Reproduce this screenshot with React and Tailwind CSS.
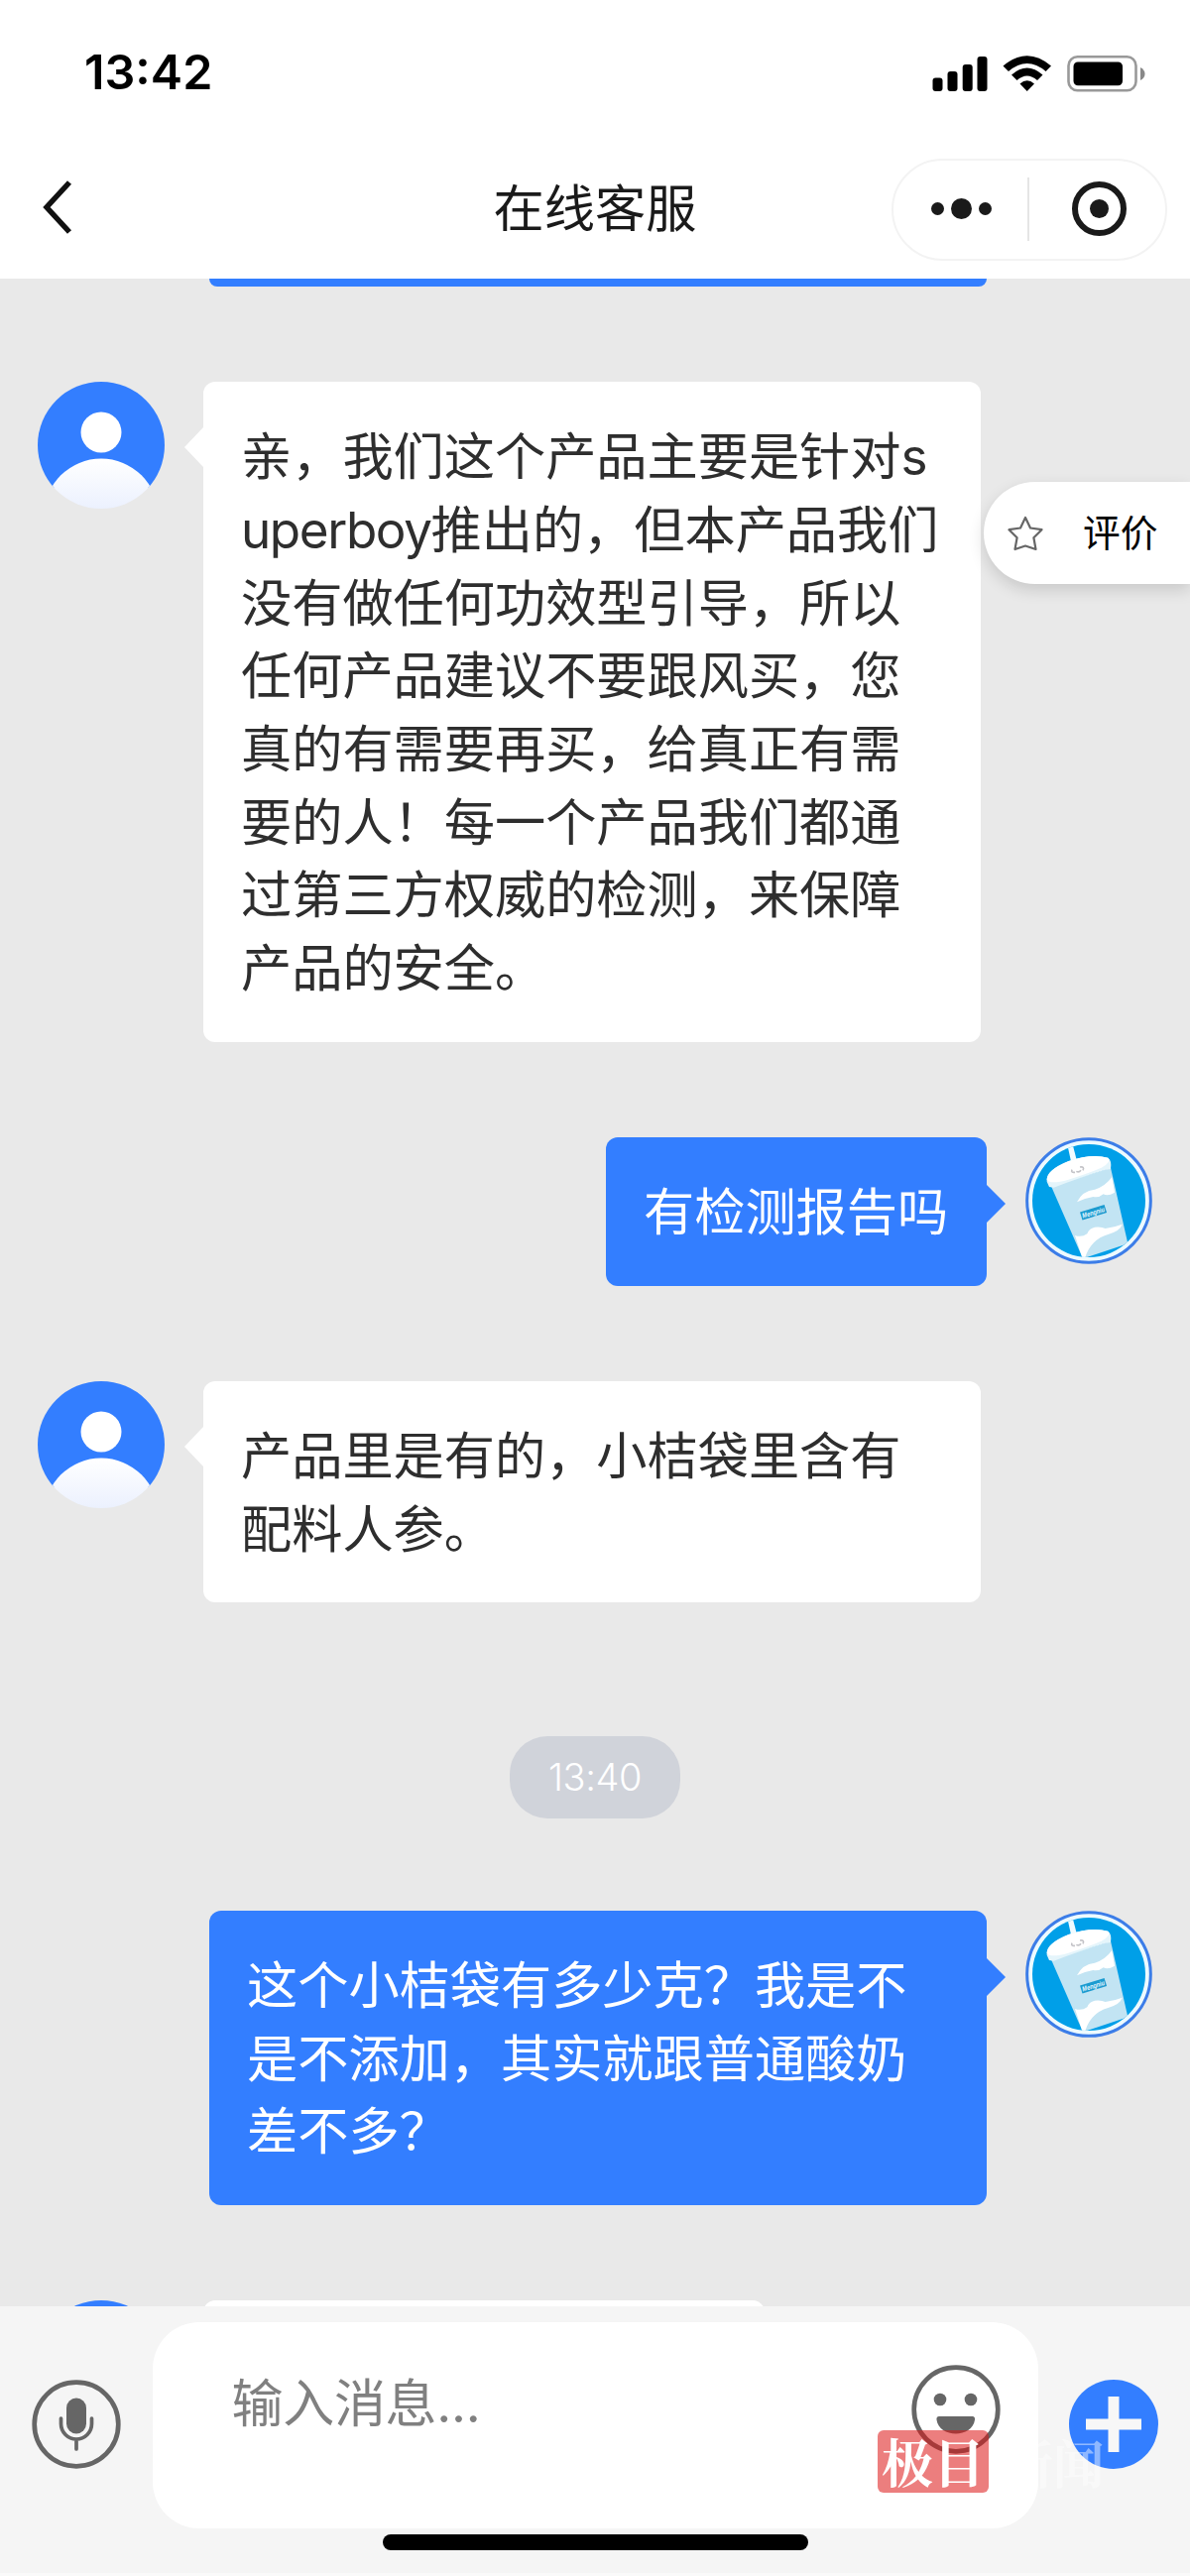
import { useState } from 'react'

const messages = [
  {
    id: 1, from: 'agent',
    lines: [
      '亲，我们这个产品主要是针对s',
      'uperboy推出的，但本产品我们',
      '没有做任何功效型引导，所以',
      '任何产品建议不要跟风买，您',
      '真的有需要再买，给真正有需',
      '要的人！每一个产品我们都通',
      '过第三方权威的检测，来保障',
      '产品的安全。',
    ],
  },
  { id: 2, from: 'user', lines: ['有检测报告吗'] },
  { id: 3, from: 'agent', lines: ['产品里是有的，小桔袋里含有', '配料人参。'] },
  { id: 4, time: '13:40' },
  { id: 5, from: 'user', lines: ['这个小桔袋有多少克？我是不', '是不添加，其实就跟普通酸奶', '差不多？'] },
]

function StatusIcons() {
  return (
    <svg width="216" height="40" viewBox="940 53 216 40">
      <rect x="940.5" y="77.5" width="10" height="13.5" rx="3" />
      <rect x="955.5" y="71" width="10" height="20" rx="3" />
      <rect x="970.7" y="64" width="10" height="27" rx="3" />
      <rect x="985.5" y="56" width="10" height="35" rx="3" />
      <path d="M1011.5 65.5 Q1035.7 45 1060 65.5 L1054.6 71 Q1035.7 55 1017 71 Z" />
      <path d="M1020 74.5 Q1035.7 60.5 1051.5 74.5 L1046 80 Q1035.7 71 1025.5 80 Z" />
      <path d="M1028.5 83.5 Q1035.7 77 1043 83.5 L1035.7 91 Z" />
      <rect x="1077.5" y="56.3" width="68" height="34" rx="9" fill="none" stroke="#999" strokeWidth="2.6" />
      <rect x="1082.5" y="61.5" width="49.5" height="23.7" rx="4.5" />
      <path d="M1150 67 Q1154.5 69.5 1154.5 73.5 Q1154.5 77.5 1150 80 Z" fill="#888" />
    </svg>
  )
}

function AgentAvatar() {
  return (
    <svg className="shrink-0" width="128" height="128" viewBox="0 0 128 128">
      <defs>
        <clipPath id="face"><circle cx="64" cy="64" r="64" /></clipPath>
        <clipPath id="upper"><rect width="128" height="107" /></clipPath>
        <linearGradient id="body" x1="0" y1="0" x2="0" y2="1">
          <stop offset="0" stopColor="#fff" />
          <stop offset="0.5" stopColor="#e9effe" />
        </linearGradient>
      </defs>
      <g clipPath="url(#upper)">
        <circle cx="64" cy="64" r="64" fill="#337eff" />
      </g>
      <circle cx="64" cy="51" r="20.5" fill="#fff" />
      <circle cx="64" cy="135" r="57.5" fill="url(#body)" clipPath="url(#face)" />
    </svg>
  )
}

function CupAvatar() {
  return (
    <svg className="shrink-0" width="128" height="128" viewBox="100 78 384 384">
      <defs>
        <clipPath id="cup"><circle cx="292" cy="270" r="171" /></clipPath>
      </defs>
      <circle cx="292" cy="270" r="187" fill="#edfaff" stroke="#3c7de8" strokeWidth="9" />
      <circle cx="292" cy="270" r="171" fill="#009fe8" />
      <g clipPath="url(#cup)">
        <path d="M226 96 L242 96 L256 150 L239 155 Z" fill="#f2fbff" />
        <path d="M178 226 L274 445 L410 400 L358 170 Z" fill="#c2e4f3" />
        <path d="M256 274 Q272 240 310 236 Q342 226 362 198 L370 245 Q350 257 336 250 Q322 262 305 258 Q280 262 256 274 Z" fill="#fff" />
        <path d="M250 375 Q270 382 287 370 Q292 354 310 350 Q330 348 342 354 Q370 350 393 341 Q388 360 350 372 Q296 388 280 445 L272 442 Z" fill="#fff" />
        <path d="M165 212 Q160 178 230 150 Q300 126 350 140 Q362 148 358 174 L340 177 Q270 198 186 230 L172 228 Z" fill="#e5f5fb" />
        <path d="M165 206 Q165 178 230 151 Q300 126 350 140 Q362 152 330 170 Q290 187 230 206 Q175 222 165 206 Z" fill="#fff" />
        <path d="M241 176 Q237 186 250 184 M254 181 Q262 186 268 178 M265 168 Q280 166 274 178" fill="none" stroke="#c4c4c8" strokeWidth="5" />
        <g transform="rotate(-17 305 305)">
          <rect x="267" y="293" width="77" height="25" fill="#1b9bd0" />
          <text x="305.5" y="313" textAnchor="middle" fontSize="21" fontWeight="700" fontStyle="italic" fill="#e8f8ff" fontFamily="Liberation Sans, sans-serif" textLength="70" lengthAdjust="spacingAndGlyphs">Mengniu</text>
        </g>
      </g>
    </svg>
  )
}

// latin runs are set a little tighter than the chinese text
function Line({ text }) {
  return (
    <p className="whitespace-nowrap">
      {text.split(/([a-z]+)/).filter(Boolean).map((part, i) => (
        /[a-z]/.test(part) ? <span key={i} className="tracking-[-1.4px]">{part}</span> : part
      ))}
    </p>
  )
}

function Bubble({ from, lines }) {
  if (from === 'agent') {
    return (
      <div className="flex items-start pl-[38px]">
        <AgentAvatar />
        <svg className="ml-5 mt-[46px] shrink-0" width="19" height="40" viewBox="0 0 19 40">
          <path d="M19 0 V40 L0 20 Z" fill="#fff" />
        </svg>
        <div className="w-[784px] rounded-xl bg-white px-[38px] pb-[37px] pt-[39px] text-[51.2px] leading-[73.7px] text-[#2e2e2e]">
          {lines.map(l => <Line key={l} text={l} />)}
        </div>
      </div>
    )
  }
  return (
    <div className="flex items-start justify-end pr-[38px]">
      <div className={`rounded-xl bg-[#337eff] px-[38px] pb-[37px] pt-[39px] text-[51.2px] leading-[73.7px] text-white ${lines.length > 1 ? 'w-[784px]' : 'w-[384px]'}`}>
        {lines.map(l => <Line key={l} text={l} />)}
      </div>
      <svg className="mr-5 mt-[48px] shrink-0" width="19" height="38" viewBox="0 0 19 38">
        <path d="M0 0 V38 L19 19 Z" fill="#337eff" />
      </svg>
      <CupAvatar />
    </div>
  )
}

export default function App() {
  const [text, setText] = useState('')

  return (
    <div className="relative flex h-[2598px] w-[1200px] flex-col overflow-hidden bg-[#e9e9e9] font-['Inter','Noto_Sans_CJK_SC',sans-serif]">
      <header className="flex h-[281px] shrink-0 flex-col bg-white">
        <div className="flex h-[147px] items-center justify-between pl-[85px] pr-[44px]">
          <span className="text-[48.5px] font-semibold leading-none text-black">13:42</span>
          <StatusIcons />
        </div>
        <div className="grid h-[128px] grid-cols-3 items-center pl-[41px] pr-[23px]">
          <button className="pb-1">
            <svg width="34" height="58" viewBox="0 0 34 58">
              <path d="M29 4 L6 29 L29 54" fill="none" stroke="#111" strokeWidth="5.5" />
            </svg>
          </button>
          <h1 className="-ml-[18px] text-center text-[51.2px] leading-none text-[#1a1a1a]">在线客服</h1>
          <div className="flex h-[103px] w-[278px] items-center justify-self-end rounded-full border-2 border-[#f3f3f3]">
            <button className="flex flex-1 items-center justify-center gap-[7px] pb-[2px] pl-[2px]">
              <i className="h-[13px] w-[13px] rounded-full bg-[#1a1a1a]" />
              <i className="h-[21px] w-[21px] rounded-full bg-[#1a1a1a]" />
              <i className="h-[13px] w-[13px] rounded-full bg-[#1a1a1a]" />
            </button>
            <div className="h-16 w-[2px] bg-[#e5e5e5]" />
            <button className="flex flex-1 justify-center pb-[2px] pl-[3px]">
              <span className="flex h-[55px] w-[55px] items-center justify-center rounded-full border-[6.5px] border-[#1a1a1a]">
                <i className="h-[19px] w-[19px] rounded-full bg-[#1a1a1a]" />
              </span>
            </button>
          </div>
        </div>
      </header>

      <main className="flex h-[2045px] shrink-0 flex-col gap-[96.2px] overflow-hidden">
        <div className="ml-[211px] h-2 w-[784px] shrink-0 rounded-b-xl bg-[#337eff]" />
        {messages.map(m => m.time ? (
          <div key={m.id} className="-mb-[3.2px] mt-[38.5px] flex justify-center">
            <span className="flex h-[83px] w-[172px] items-center justify-center rounded-[38px] bg-[#d0d3da] text-[38px] font-light tracking-[-0.4px] text-white">{m.time}</span>
          </div>
        ) : (
          <Bubble key={m.id} from={m.from} lines={m.lines} />
        ))}
        <div className="flex items-start pl-[38px]">
          <AgentAvatar />
          <div className="ml-[39px] h-[150px] w-[566px] rounded-xl bg-white" />
        </div>
      </main>

      <footer className="flex h-[272px] shrink-0 flex-col items-center border-b-[3px] border-[#fafafa] bg-[#f5f5f5] pt-4">
        <div className="flex w-full items-center justify-between px-8">
          <button className="pb-[2px]">
            <svg width="90" height="90" viewBox="0 0 90 90" fill="none" stroke="#666">
              <circle cx="45" cy="45" r="42.3" strokeWidth="4.7" />
              <rect x="35" y="18.5" width="20" height="36" rx="10" fill="#666" stroke="none" />
              <path d="M29.5 39 V44.5 A15.5 15.5 0 0 0 60.5 44.5 V39 M45 60 V70" strokeWidth="3.7" strokeLinecap="round" />
            </svg>
          </button>
          <div className="flex h-[208px] w-[893px] items-start justify-between rounded-[47px] bg-white pl-[80px] pr-[38px]">
            <input
              className="mt-[43px] h-[80px] w-[560px] bg-transparent text-[52px] leading-[80px] tracking-[-0.3px] text-[#333] outline-none placeholder:text-[#808080]"
              placeholder="输入消息..." value={text} onChange={e => setText(e.target.value)} />
            <button className="mt-[43px]">
              <svg width="90" height="90" viewBox="0 0 90 90">
                <circle cx="45" cy="45" r="42.3" fill="none" stroke="#666" strokeWidth="4.7" />
                <circle cx="29" cy="35" r="6.3" fill="#666" />
                <circle cx="60" cy="35" r="6.3" fill="#666" />
                <path d="M28 52 H61.5 Q64.5 52 64 55.5 C61.5 74 28 74 25.5 55.5 Q25 52 28 52 Z" fill="#666" />
              </svg>
            </button>
          </div>
          <button className="pb-[2px]">
            <svg width="90" height="90" viewBox="0 0 90 90">
              <circle cx="45" cy="45" r="45" fill="#337eff" />
              <path d="M39.5 17 H50.500 V39.500 H73 V50.500 H50.500 V73 H39.500 V50.500 H17 V39.500 H39.500 Z" fill="#f7f7f7" />
            </svg>
          </button>
        </div>
        <div className="mt-[6px] h-4 w-[429px] rounded-full bg-black" />
      </footer>

      {/* floating rate button */}
      <button className="absolute right-0 top-[486px] flex h-[103px] w-[208px] items-center rounded-l-full bg-white pl-[23px] text-black shadow-[0_6px_16px_rgba(0,0,0,0.14)]">
        <svg width="38" height="38" viewBox="0 0 38 38">
          <path d="M19 3 L24 13.5 L35.5 15.2 L27.4 23.3 L29.5 35 L19 31.5 L8.500 35 L10.6 23.3 L2.5 15.2 L14 13.5 Z" fill="none" stroke="#666" strokeWidth="2.2" strokeLinejoin="round" />
        </svg>
        <span className="ml-[39px] text-[37.7px] leading-none">评价</span>
      </button>

      {/* news source mark */}
      <div className="absolute left-[885px] top-[2451px] flex h-[63px] items-center font-['Noto_Serif_CJK_SC','Noto_Sans_CJK_SC',serif] text-[52px] font-bold leading-none text-white">
        <span className="flex h-[63px] w-[112px] items-center justify-center rounded-md bg-[#dc1414]/55 pb-[2px]">极目</span>
        <span className="ml-[13px] opacity-45">新闻</span>
      </div>
    </div>
  )
}
